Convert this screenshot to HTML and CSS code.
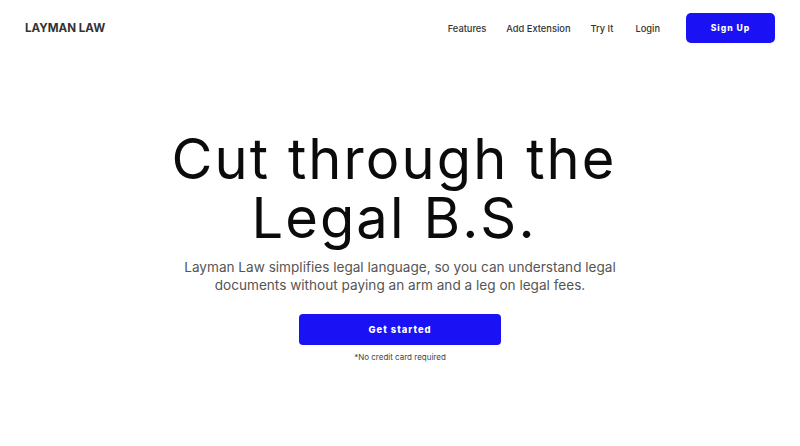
FILE: index.html
```html
<!DOCTYPE html>
<html lang="en">
<head>
<meta charset="utf-8">
<title>Layman Law</title>
<link rel="stylesheet" href="styles.css">
</head>
<body>
<header class="nav">
  <div class="logo">LAYMAN LAW</div>
  <nav class="links">
    <a class="link" href="#">Features</a>
    <a class="link" href="#">Add Extension</a>
    <a class="link" href="#">Try It</a>
    <a class="link" href="#">Login</a>
    <a class="btn btn-nav" href="#">Sign Up</a>
  </nav>
</header>
<main class="hero">
  <h1 class="title">Cut through the<br>Legal B.S.</h1>
  <p class="sub">Layman Law simplifies legal language, so you can understand legal<br>documents without paying an arm and a leg on legal fees.</p>
  <a class="btn btn-cta" href="#">Get started</a>
  <p class="note">*No credit card required</p>
</main>
</body>
</html>
```
FILE: styles.css
```css
* { box-sizing: border-box; }
html, body { margin: 0; padding: 0; background: #fff; }
body { font-family: Inter, "Liberation Sans", sans-serif; color: #111; }
a { text-decoration: none; }
.nav {
  display: flex;
  align-items: center;
  justify-content: space-between;
  height: 56px;
  padding: 0 25px 0 25px;
}
.logo {
  font-family: Inter, sans-serif;
  font-weight: 700;
  font-size: 11.6px;
  color: #333;
  margin-top: -1px;
}
.links { display: flex; align-items: center; }
.link {
  font-size: 9.3px;
  font-weight: 500;
  color: #333;
  margin-right: 20px;
}
.link:nth-child(3) { margin-right: 22px; }
.link:nth-child(4) { margin-right: 26px; }
.btn {
  display: flex;
  align-items: center;
  justify-content: center;
  background: #1a12f5;
  color: #fff;
  font-family: Inter, sans-serif;
  font-weight: 800;
  letter-spacing: 1px;
}
.btn-nav {
  width: 89px;
  height: 30px;
  border-radius: 5px;
  font-size: 8.6px;
}
.hero {
  display: flex;
  flex-direction: column;
  align-items: center;
  padding-top: 74px;
}
.title {
  margin: 0;
  padding-right: 12px;
  font-family: Inter, sans-serif;
  font-weight: 400;
  font-size: 56px;
  line-height: 59px;
  letter-spacing: 2.1px;
  text-align: center;
  color: #0b0b0b;
}
.sub {
  margin: 10px 0 0;
  font-size: 13.6px;
  line-height: 18px;
  text-align: center;
  color: #555;
}
.btn-cta {
  margin-top: 20px;
  width: 202px;
  height: 31px;
  border-radius: 4px;
  font-size: 9.4px;
}
.note {
  margin: 7px 0 0;
  font-size: 8px;
  color: #444;
}
```
